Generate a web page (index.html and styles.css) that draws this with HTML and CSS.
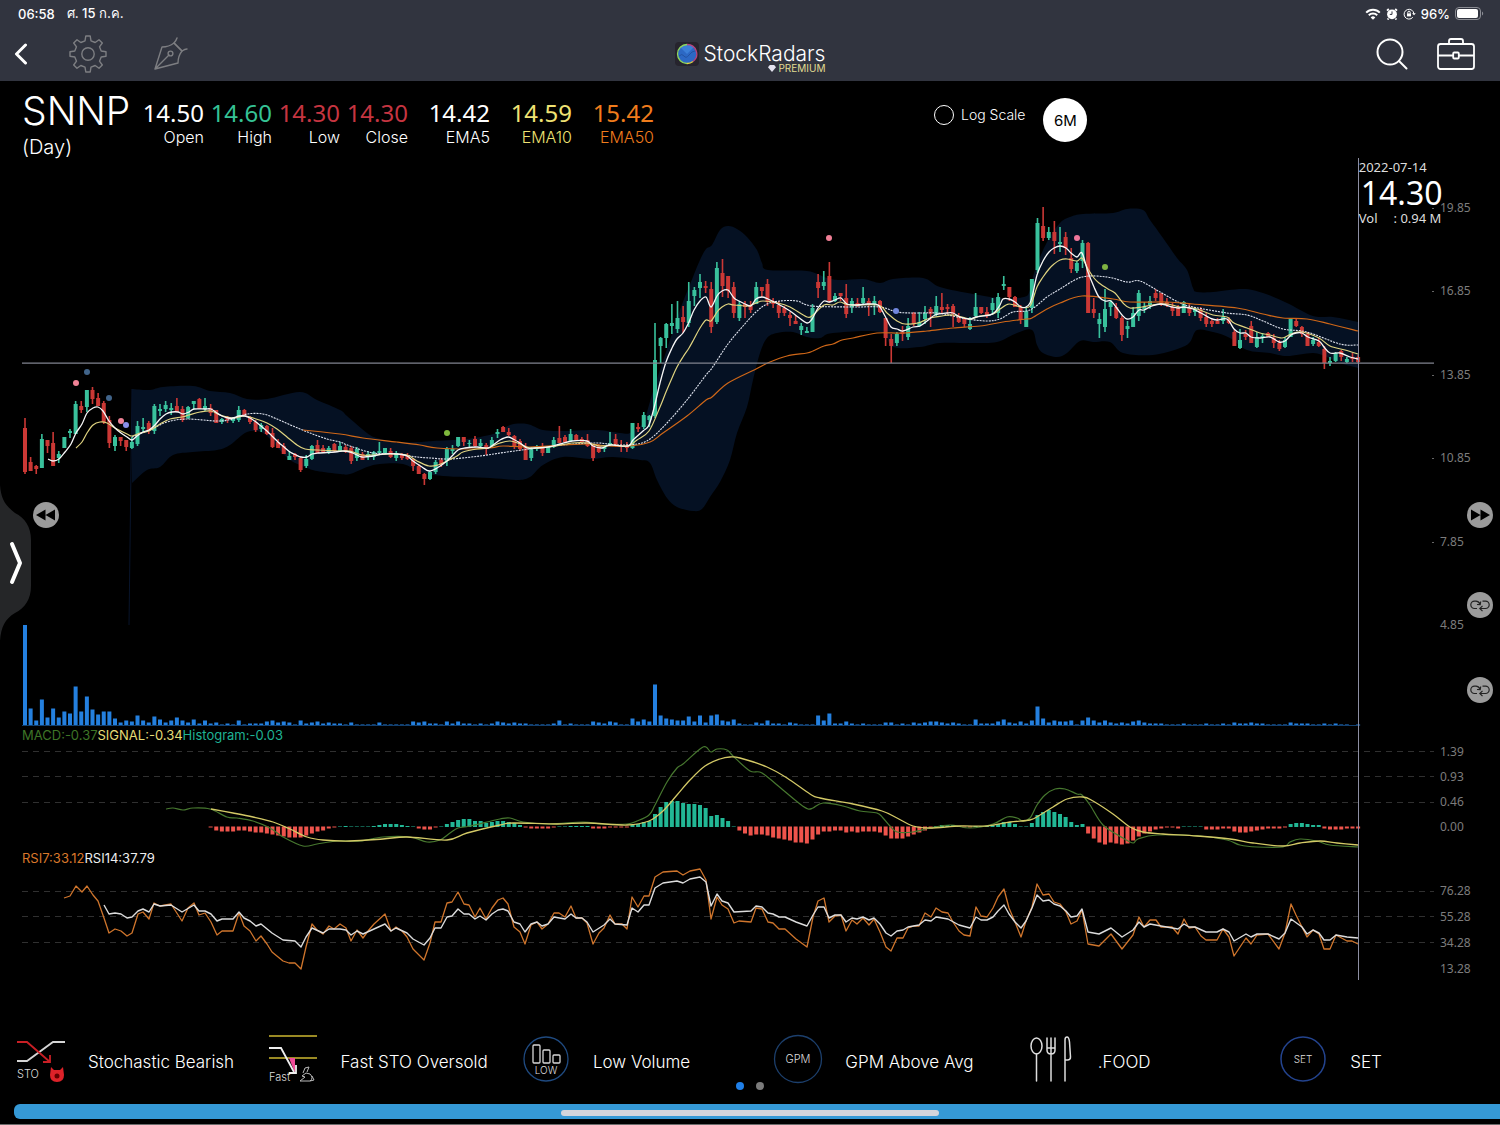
FILE: index.html
```html
<!DOCTYPE html>
<html lang="th">
<head>
<meta charset="utf-8">
<meta name="viewport" content="width=device-width, initial-scale=1">
<title>StockRadars – SNNP</title>
<link rel="stylesheet" href="styles.css">
</head>
<body>
<header class="topbar">
  <div class="status">
    <div class="status-side"><span>06:58</span><span>ศ. 15 ก.ค.</span></div>
    <div class="status-side status-right">
      <svg width="16" height="12" viewBox="0 0 16 12" fill="none" stroke="#fff" stroke-width="2"><path d="M1.2 4.6a9.6 9.6 0 0 1 13.6 0M3.8 7.2a6 6 0 0 1 8.4 0"/><path d="M8 11.8 5.7 9.4a3.3 3.3 0 0 1 4.6 0z" fill="#fff" stroke="none"/></svg>
      <svg width="12" height="12" viewBox="0 0 12 12"><circle cx="6" cy="6.3" r="4.9" fill="#fff"/><path d="M1 2.6 2.8 1M11 2.6 9.2 1M2.5 10.5 1.6 11.6M9.5 10.5l.9 1.1" stroke="#fff" stroke-width="1.8"/><path d="M6 3.4v3H3.8" fill="none" stroke="#31343f"/></svg>
      <svg width="13" height="12" viewBox="0 0 13 12" fill="none" stroke="#fff"><path d="M9.8 9.3A4.9 4.9 0 1 1 10.9 6"/><path d="m9 5.2 2 2 1.8-2z" fill="#fff" stroke="none"/><rect x="4" y="5.4" width="4" height="3" fill="#fff" stroke="none"/><path d="M4.8 5.5V4.4a1.2 1.2 0 0 1 2.4 0v1.1"/></svg>
      <span>96%</span>
      <svg width="29" height="13" viewBox="0 0 29 13"><rect x=".5" y=".5" width="25" height="12" rx="3.5" fill="none" stroke="#8b8d94"/><rect x="2" y="2" width="21" height="9" rx="2" fill="#fff"/><path d="M27 4.5c1.600.5 1.600 3.500 0 4z" fill="#8b8d94"/></svg>
    </div>
  </div>
  <nav class="nav">
    <div class="nav-side">
      <button class="icon-btn back" aria-label="Back"><svg width="14" height="22" viewBox="0 0 14 22" fill="none" stroke="#fff" stroke-width="3" stroke-linecap="round" stroke-linejoin="round"><path d="M11.500 2 2.500 11l9 9"/></svg></button>
      <button class="icon-btn gear" aria-label="Settings"><svg width="38" height="38" viewBox="-19 -19 38 38" fill="none" stroke="#7d7e82" stroke-width="1.400" stroke-linejoin="round"><circle r="6.200"/><path d="M-3-13.200-2.200-18H2.200L3-13.200 7.200-11.500 11-14.300 14.300-11 11.500-7.200 13.200-3 18-2.200V2.200L13.200 3 11.500 7.200 14.300 11 11 14.300 7.200 11.500 3 13.200 2.200 18H-2.200L-3 13.200-7.200 11.500-11 14.300-14.300 11-11.500 7.200-13.200 3-18 2.200V-2.200L-13.200-3-11.500-7.200-14.300-11-11-14.300-7.200-11.500z"/></svg></button>
      <button class="icon-btn" aria-label="Draw"><svg width="36" height="34" viewBox="0 0 36 34" fill="none" stroke="#7d7e82" stroke-width="1.400" stroke-linejoin="round" stroke-linecap="round"><path d="M2 32 9 10q7 0 12-4l8 8q-4 5-4 12zL16 18"/><circle cx="17.500" cy="16.500" r="2.400"/><path d="M21 6q2-2 3-5M29 14q3-2 5-2M21 6l8 8"/></svg></button>
    </div>
    <a class="brand" href="#">
      <svg width="24" height="24" viewBox="0 0 24 24"><rect width="24" height="24" rx="4" fill="#26242d"/><circle cx="12" cy="12" r="9.500" fill="#2c68c4"/><path d="M12 12 5 5a10 10 0 0 1 14 0z" fill="#3b7fd8"/><path d="M4 14q3-3 5 0t5-1 6-4" fill="none" stroke="#2353a2"/><path d="M12 2.500a9.500 9.500 0 0 0 0 19" fill="none" stroke="#8fd65a" stroke-width="1.300"/><path d="M12 21.500a9.500 9.500 0 0 0 6-2" fill="none" stroke="#e5d33e" stroke-width="1.300"/><path d="M18 19.500a9.500 9.500 0 0 0-6-17" fill="none" stroke="#b8447f" stroke-width="1.300"/></svg>
      <span class="brand-text"><span class="brand-name">StockRadars</span><span class="brand-tier"><svg width="8" height="7" viewBox="0 0 8 7"><path d="M1.800 0h4.400L8 2.200 4 7 0 2.200z" fill="#e4e4f0"/></svg>PREMIUM</span></span>
    </a>
    <div class="nav-side nav-right">
      <button class="icon-btn" aria-label="Search"><svg width="32" height="32" viewBox="0 0 32 32" fill="none" stroke="#fff" stroke-width="2" stroke-linecap="round"><circle cx="14" cy="14" r="12.500"/><path d="m23 23 7.500 7.500"/></svg></button>
      <button class="icon-btn" aria-label="Portfolio"><svg width="38" height="32" viewBox="0 0 38 32" fill="none" stroke="#fff" stroke-width="1.800" stroke-linejoin="round"><rect x="1" y="6" width="36" height="25" rx="2.500"/><path d="M12 6V3q0-2 2-2h10q2 0 2 2v3M1 17.500h15M22 17.500h15"/><rect x="16.200" y="14.500" width="5.600" height="6" rx="1"/></svg></button>
    </div>
  </nav>
</header>

<main>
  <section class="info">
    <div class="symbol"><h1>SNNP</h1><p>(Day)</p></div>
    <dl class="stats">
      <div class="stat"><dd>14.50</dd><dt>Open</dt></div>
      <div class="stat"><dd class="up">14.60</dd><dt>High</dt></div>
      <div class="stat"><dd class="down">14.30</dd><dt>Low</dt></div>
      <div class="stat"><dd class="down">14.30</dd><dt>Close</dt></div>
      <div class="stat ema"><dd>14.42</dd><dt>EMA5</dt></div>
      <div class="stat ema ema10"><dd>14.59</dd><dt>EMA10</dt></div>
      <div class="stat ema ema50"><dd>15.42</dd><dt>EMA50</dt></div>
    </dl>
    <div class="options">
      <label class="log"><input type="checkbox">Log Scale</label>
      <button class="range">6M</button>
    </div>
  </section>

  <section class="chart" aria-label="SNNP daily chart">
    <div class="panel price">
      <svg class="plot" id="price" viewBox="22 158 1412 467" preserveAspectRatio="none"></svg>
      <ol class="axis"><li>19.85</li><li>16.85</li><li>13.85</li><li>10.85</li><li>7.85</li><li>4.85</li></ol>
    </div>
    <div class="panel volume">
      <svg class="plot" id="volume" viewBox="22 625 1412 101" preserveAspectRatio="none"></svg>
    </div>
    <p class="legend"><span class="c-macd">MACD:-0.37</span><span class="c-signal">SIGNAL:-0.34</span><span class="c-hist">Histogram:-0.03</span></p>
    <div class="panel macd">
      <svg class="plot" id="macd" viewBox="22 744 1412 106" preserveAspectRatio="none"></svg>
      <ol class="axis"><li>1.39</li><li>0.93</li><li>0.46</li><li>0.00</li></ol>
    </div>
    <p class="legend"><span class="c-rsi7">RSI7:33.12</span><span class="c-rsi14">RSI14:37.79</span></p>
    <div class="panel rsi">
      <svg class="plot" id="rsi" viewBox="22 866 1412 114" preserveAspectRatio="none"></svg>
      <ol class="axis"><li>76.28</li><li>55.28</li><li>34.28</li><li>13.28</li></ol>
    </div>
    <div class="overlay">
      <div class="cursor">
        <span class="cursor-date">2022-07-14</span>
        <strong>14.30</strong>
        <span class="cursor-vol"><span>Vol</span><span>: 0.94 M</span></span>
      </div>
    </div>
    <button class="round rewind" aria-label="Earlier"><svg viewBox="0 0 26 26"><path d="M12.500 7.500v11L3 13zM22 7.500v11L12.500 13z"/></svg></button>
    <button class="round forward" aria-label="Later"><svg viewBox="0 0 26 26"><path d="M13.500 7.500v11L23 13zM4 7.500v11l9.500-5.500z"/></svg></button>
    <button class="round swap-a" aria-label="Switch upper indicator"><svg viewBox="0 0 26 26"><path class="loop" d="M10 16.500H7.500a3.700 3.700 0 0 1 0-7.400H9q2.500 0 4 3M10 12.500l3.200.2.500-3.200M15.500 9.100h3a3.700 3.700 0 0 1 0 7.400h-5.500M15.500 13.800l-2.700 2.700 2.700 2.700"/></svg></button>
    <button class="round swap-b" aria-label="Switch lower indicator"><svg viewBox="0 0 26 26"><path class="loop" d="M10 16.500H7.500a3.700 3.700 0 0 1 0-7.400H9q2.500 0 4 3M10 12.500l3.200.2.500-3.200M15.500 9.100h3a3.700 3.700 0 0 1 0 7.400h-5.500M15.500 13.800l-2.700 2.700 2.700 2.700"/></svg></button>
  </section>
</main>

<footer class="footer">
  <ul class="signals">
    <li><a href="#">
      <svg class="signal-icon" viewBox="0 0 52 52" fill="none" stroke-width="1.800"><path d="M2 28h10L38 9h12" stroke="#d4d4d4"/><path d="M2 9h10l23 20M35 22v7h-7" stroke="#c91f25"/><path d="m36 34 3 3h6l3-3 1 8q0 7-7 7t-7-7z" fill="#dd2229"/><circle cx="42" cy="43" r="2.500" fill="#600"/><text x="2" y="45" class="t11">STO</text></svg>
      <span>Stochastic Bearish</span></a></li>
    <li><a href="#">
      <svg class="signal-icon" viewBox="0 0 52 52" fill="none" stroke-width="1.800"><path d="M2 3h48M2 25h48" stroke="#9a8a24"/><path d="M22 25h6v15z" fill="#f04a98"/><path d="M2 15h12l13 24M29 32v8h-7" stroke="#eee"/><path d="M33 48h10q4-3 0-7l-4-1-4 3 3 1zM36 40l2-5 4-1-2 5M43 48l4-1-2-4" stroke="#bbb" stroke-width="1"/><text x="2" y="48" class="t11">Fast</text></svg>
      <span>Fast STO Oversold</span></a></li>
    <li><a href="#">
      <svg class="signal-icon" viewBox="0 0 52 52" fill="none" stroke="#d8d8d8" stroke-width="1.300"><circle cx="26" cy="26" r="22" stroke="#1f4a80"/><rect x="13" y="12" width="7" height="18" rx="1"/><rect x="23" y="17" width="7" height="13" rx="1"/><rect x="33" y="22" width="7" height="8" rx="1"/><text x="26" y="41" text-anchor="middle" class="t10">LOW</text></svg>
      <span>Low Volume</span></a></li>
    <li><a href="#">
      <svg class="signal-icon" viewBox="0 0 52 52" fill="none"><circle cx="26" cy="26" r="23.500" stroke="#1c3f6c" stroke-width="1.300"/><text x="26" y="30" text-anchor="middle" class="t11">GPM</text></svg>
      <span>GPM Above Avg</span></a></li>
    <li><a href="#">
      <svg class="signal-icon" viewBox="0 0 52 52" fill="none" stroke="#ddd" stroke-width="1.500" stroke-linecap="round"><ellipse cx="11.500" cy="13" rx="5.500" ry="8"/><path d="M11.500 21v27M22 5v12q0 4 4 4t4-4V5M26 5v43M22 15h8M40 48V7q0-3 2-3t2.500 5l1 15q0 3-3 3H40"/></svg>
      <span>.FOOD</span></a></li>
    <li><a href="#">
      <svg class="signal-icon" viewBox="0 0 52 52" fill="none"><circle cx="26" cy="26" r="22" stroke="#23438e" stroke-width="1.500"/><text x="26" y="30" text-anchor="middle" class="t10">SET</text></svg>
      <span>SET</span></a></li>
  </ul>
  <div class="pager"><span class="on"></span><span></span></div>
  <div class="ad"><span class="home"></span></div>
</footer>

<button class="side-tab" aria-label="Open side panel"><svg width="32" height="156" viewBox="0 0 32 156"><path d="M0 0C1 14 5 20 15 28 25 33 31 42 31 55v46c0 13-6 22-16 27C5 134 1 142 0 156z" fill="#252628"/><path d="m12 59 8 19-8 19" fill="none" stroke="#fff" stroke-width="4" stroke-linecap="round" stroke-linejoin="round"/></svg></button>
<script src="chart.js"></script>
</body>
</html>
```
FILE: styles.css
```css
* { box-sizing: border-box; }

body {
  margin: 0;
  min-height: 100vh;
  display: flex;
  flex-direction: column;
  position: relative;
  background: #000;
  color: #fff;
  font-family: Inter, "Noto Sans", sans-serif;
  font-size: 16px;
  font-optical-sizing: none;
}

h1, p, dl, dd, ol, ul { margin: 0; padding: 0; list-style: none; }
button { padding: 0; border: 0; background: none; color: inherit; font: inherit; cursor: pointer; }
svg { display: block; }
a { color: inherit; text-decoration: none; }

/* Header */
.topbar { height: 81px; background: #31343f; }
.status {
  display: flex;
  justify-content: space-between;
  height: 27px;
  padding: 0 16px 0 18px;
  font-size: 13px;
  font-weight: 500;
}
.status-side { display: flex; align-items: center; gap: 12px; }
.status-right { gap: 5px; }
.nav {
  display: grid;
  grid-template-columns: 1fr auto 1fr;
  align-items: center;
  height: 54px;
  padding: 0 25px 0 14px;
}
.nav-side { display: flex; align-items: center; }
.nav-right { justify-content: flex-end; gap: 29px; }
.icon-btn { display: block; }
.gear { margin: 0 46px 0 41px; }
.brand { display: flex; align-items: center; gap: 5px; padding-left: 11px; }
.brand-text { display: flex; flex-direction: column; align-items: flex-end; padding-top: 8px; }
.brand-name { font-size: 21px; line-height: 20px; font-weight: 300; font-optical-sizing: auto; }
.brand-tier { display: flex; align-items: center; gap: 2px; font-size: 10px; line-height: 8px; color: #e0dc92; }

/* Quote summary */
main { flex: 1; display: flex; flex-direction: column; }
.info { display: flex; height: 77px; padding-left: 22px; }
.symbol { width: 114px; padding-top: 8px; white-space: nowrap; }
.symbol h1 { font-size: 39px; line-height: 44px; font-weight: 300; }
.symbol p { font-size: 20px; line-height: 28px; font-weight: 300; }
.stats { display: flex; padding-top: 18px; }
.stat { display: flex; flex-direction: column; width: 68px; text-align: right; }
.stat.ema { width: 82px; }
.stat dd { font: 24px/28px "Noto Sans", sans-serif; }
.stat dt { line-height: 20px; font-weight: 300; }
.up { color: #35c295; }
.down { color: #c63541; }
.ema10 { color: #efe273; }
.ema50 { color: #f07c1c; }
.options { display: flex; gap: 18px; margin-left: 280px; padding-top: 17px; }
.log { display: flex; align-items: center; gap: 7px; height: 33px; font-size: 14px; font-weight: 300; }
.log input {
  appearance: none;
  width: 20px;
  height: 20px;
  margin: 0;
  border: 1px solid #fff;
  border-radius: 50%;
}
.range { width: 44px; height: 44px; border-radius: 50%; background: #fff; color: #000; font-size: 15px; }

/* Chart panels */
.chart { flex: 1; display: flex; flex-direction: column; position: relative; padding-left: 22px; }
.panel { display: grid; grid-template-columns: 1fr 66px; min-height: 0; }
.price { flex: 1 1 467px; min-height: 300px; }
.volume { height: 101px; }
.macd { height: 106px; }
.rsi { height: 114px; }
.plot { width: 100%; height: 100%; min-height: 0; overflow: hidden; }
.plot * { vector-effect: non-scaling-stroke; }
.axis {
  display: flex;
  flex-direction: column;
  justify-content: space-between;
  padding-left: 6px;
  font: 12px/16px "Noto Sans", sans-serif;
  color: #7c7c7c;
}
.price .axis { padding-top: 42px; margin-bottom: -8px; }
.price .axis li::before { content: ""; float: left; width: 2px; height: 1px; margin: 8px 0 0 -8px; background: #666; }
.price .axis li:last-child::before { display: none; }
.macd .axis { padding-bottom: 15px; }
.rsi .axis { padding: 17px 0 3px 6px; }
.legend { font-size: 13px; line-height: 16px; height: 16px; }
.volume + .legend { height: 18px; line-height: 18px; }
.c-macd { color: #3e7527; }
.c-signal { color: #e5dc76; }
.c-hist { color: #1fb294; }
.c-rsi7 { color: #d9782b; }
.c-rsi14 { color: #eee; }

.overlay { position: absolute; inset: 0 66px 0 22px; pointer-events: none; }
.cursor {
  position: absolute;
  top: 0;
  bottom: 0;
  left: 94.6%;
  display: flex;
  flex-direction: column;
  border-left: 1px solid #8d8fa3;
  font: 13px/18px "Noto Sans", sans-serif;
  color: #ddd;
  white-space: nowrap;
}
.cursor strong { padding-left: 2px; font-size: 32px; line-height: 34px; font-weight: 400; color: #fff; }
.cursor-vol { display: flex; gap: 16px; line-height: 16px; }

.round { position: absolute; width: 26px; height: 26px; border-radius: 50%; background: #9b9b9b; }
.round svg { width: 26px; height: 26px; fill: #000; }
.round .loop { fill: none; stroke: #222; stroke-width: 1.2; }
.rewind { left: 33px; top: 344px; }
.forward { right: 7px; top: 344px; }
.swap-a { right: 7px; top: 434px; }
.swap-b { right: 7px; top: 519px; }
.side-tab { position: absolute; left: 0; top: 485px; }

/* Signal strip */
.footer { padding-top: 53px; border-bottom: 1px solid #6b6b6b; overflow: hidden; }
.signals { display: flex; margin-left: 15px; }
.signals li { flex: 0 0 17%; }
.signals a { display: flex; align-items: center; gap: 21px; height: 52px; font-size: 17px; font-weight: 300; white-space: nowrap; }
.signals a > span { padding-top: 6px; }
.signal-icon { width: 52px; height: 52px; flex: none; }
.signal-icon text { fill: #ddd; stroke: none; font-family: Inter, sans-serif; }
.t11 { font-size: 11px; }
.t10 { font-size: 10px; }
.pager { display: flex; justify-content: center; gap: 12px; height: 19px; }
.pager span { width: 8px; height: 8px; margin-top: -3px; border-radius: 50%; background: #7b7b7b; }
.pager .on { background: #1f7fe8; }
.ad {
  display: flex;
  justify-content: center;
  height: 15px;
  margin: 0 0 5px 14px;
  padding: 6px 14px 0 0;
  border-radius: 6px 0 0 6px;
  background: #3599d6;
}
.home { width: 25.7%; height: 6px; border-radius: 3px; background: #d3d5dc; }
```
FILE: chart.js
```js
// Bars sit 5.625 units apart; every series uses the viewBox units of its panel.
const X0 = 25, STEP = 5.625;
const NS = 'http://www.w3.org/2000/svg';
const pairs = s => s.trim().split(/\s+/).map(p => p.split(',').map(Number));
const barX = i => X0 + i * STEP;

function add(id, tag, attrs) {
  const el = document.createElementNS(NS, tag);
  for (const k in attrs) el.setAttribute(k, attrs[k]);
  document.getElementById(id).appendChild(el);
}
// Catmull-Rom spline through the points
function spline(p) {
  let d = '';
  for (let i = 0; i < p.length - 1; i++) {
    const a = p[i - 1] || p[i], b = p[i], c = p[i + 1], e = p[i + 2] || c;
    d += `C${b[0] + (c[0] - a[0]) / 6} ${b[1] + (c[1] - a[1]) / 6} ${c[0] - (e[0] - b[0]) / 6} ${c[1] - (e[1] - b[1]) / 6} ${c[0]} ${c[1]}`;
  }
  return d;
}
function line(id, s, color, width, smooth, extra) {
  const p = pairs(s);
  const d = 'M' + p[0] + (smooth ? spline(p) : 'L' + p.slice(1).join(' '));
  add(id, 'path', Object.assign({ d, fill: 'none', stroke: color, 'stroke-width': width, 'stroke-linejoin': 'round' }, extra));
}
const box = (x, y, w, h) => `M${x - w / 2} ${y}h${w}v${h}h${-w}z`;

// direction, high, body top, body bottom, low
const candles = `
r418,428,472,474 r457,462,471,471 r465,466,469,474 g434,439,468,468 r440,440,446,453 r432,443,466,466 g451,454,458,463 g437,437,448,448 g429,431,433,438 g401,404,434,434
r401,406,410,413 g390,390,407,412 r387,390,399,404 r393,398,406,406 r401,403,422,424 r416,420,443,448 g435,437,446,451 r437,437,441,446 r440,440,447,451 g437,442,448,449
g421,426,444,446 g418,427,429,433 r421,423,431,434 g404,406,431,434 g404,409,411,416 g401,405,409,412 g403,408,410,415 r398,406,412,412 r406,409,420,422 g406,407,418,419
g401,401,404,409 r398,399,409,409 g398,406,409,411 r404,408,413,416 r410,410,423,423 g418,419,422,424 r416,417,420,423 g417,418,421,423 g406,410,420,422 r409,410,416,416
r416,417,422,424 r420,422,430,432 g423,425,429,432 r425,426,434,435 r428,433,447,448 r439,442,448,448 r443,446,454,454 g451,456,460,460 r453,454,457,460 r457,458,470,472
g455,459,466,468 g445,446,459,460 r440,445,453,453 r445,448,452,453 g446,448,453,454 r443,444,451,452 g442,446,451,452 r445,447,452,453 r446,448,461,464 g447,449,458,461
r452,454,460,460 g451,454,457,460 g451,452,457,460 g442,451,453,454 g448,448,453,453 r448,451,457,458 g451,453,458,461 r453,455,458,460 r453,455,459,460 r458,459,466,471
r464,466,474,474 r473,474,479,485 g471,472,479,480 g460,462,472,474 r458,460,465,467 g447,449,461,466 g445,449,451,454 g437,437,446,447 r437,437,442,446 g440,443,444,447
r436,439,446,447 g439,443,446,447 r443,445,449,455 g437,440,446,447 g429,432,434,438 r426,427,432,432 r428,432,435,436 r435,436,447,449 r439,441,449,451 r443,447,460,460
g447,448,458,461 g445,447,449,451 r443,447,453,456 g446,447,453,453 g437,440,447,448 r426,438,443,443 r435,437,442,442 g429,434,441,442 r434,435,441,441 r437,439,442,442
r434,440,446,447 r444,445,458,461 r444,446,452,453 g446,447,449,452 g432,443,445,446 r434,439,446,447 r440,446,447,452 r442,446,448,452 g423,423,448,449 r423,427,429,432
g412,415,427,429 g415,416,420,427 g323,360,416,418 g337,338,346,363 g323,324,338,348 g304,323,326,334 g301,318,329,333 r306,317,322,333 g282,301,323,327 g287,290,296,306
g274,282,288,298 r281,286,288,293 r282,289,327,333 g262,268,322,324 r259,273,286,297 r276,276,291,298 r282,287,313,318 g301,304,318,321 r301,304,307,318 r301,306,310,313
g282,287,304,304 r287,287,291,297 r279,284,302,306 r298,301,304,308 r301,305,313,318 r306,308,313,316 r312,315,318,326 r315,321,324,324 g323,326,330,335 g327,331,333,333
g304,308,332,332 r274,282,288,298 g271,282,286,290 r262,276,301,303 g293,296,301,302 r293,293,296,301 r284,298,314,318 g298,301,307,313 r298,303,306,307 g287,298,303,305
r298,301,304,316 g296,301,304,315 r300,301,312,313 r318,318,338,346 r334,339,346,363 g332,334,343,346 r326,332,334,341 g318,326,337,340 r312,313,324,326 g312,322,326,327
g306,313,319,324 r307,309,314,327 g296,306,315,316 r293,307,310,313 r304,307,309,314 r304,306,314,327 r313,317,322,323 r318,319,324,327 g317,324,329,330 g293,307,316,317
r307,307,313,314 r307,312,316,318 g298,303,310,315 g293,297,313,318 g276,284,286,290 r287,287,297,301 r296,297,307,307 r305,307,320,324 g307,311,327,327 g279,279,308,313
g218,223,270,273 r207,226,238,241 g227,232,238,240 r221,232,241,254 g227,242,244,252 r232,237,248,255 r248,258,269,273 g261,263,271,273 g240,243,261,268 r242,243,313,313
r298,309,313,318 g313,319,324,338 g289,309,327,332 g300,302,307,316 r303,307,318,319 r316,318,335,341 g321,326,329,338 g307,313,327,327 g290,293,316,321 g302,307,309,313
g296,301,305,309 r289,293,298,301 r293,293,305,306 r298,302,305,307 r303,307,311,316 r305,308,316,316 g301,302,313,313 r303,308,313,316 g307,309,312,316 r307,309,318,321
r313,317,324,327 r319,321,324,327 r318,321,324,324 g309,317,321,324 r317,319,323,324 r330,332,346,346 g329,340,348,349 r330,334,337,340 r321,326,343,343 g332,337,347,348
g333,336,338,343 r332,333,337,337 r334,338,343,348 r340,343,349,351 g337,340,347,348 g318,319,337,337 r319,321,326,327 r326,327,334,337 r332,334,346,346 g337,340,344,346
r338,342,346,347 r346,349,363,369 g357,361,363,366 g352,353,361,362 r350,351,357,361 g357,359,362,363 r353,357,359,362 r355,357,362,363`;

const volumes = `101 17 5 26 8 17 8 14 12 39 14 29 16 11 14 14 7 3 5 4 10 5 3 9 6 3 5 8 5 3 6 2 5 2 3 1 2 1 5 1 2 2 2 4 5 3 4 3 1 5 2 3 4 2 3 2 2 1 3 1
1 1 1 3 1 1 1 1 1 4 3 4 2 2 1 4 2 4 2 2 1 2 1 2 4 3 2 3 2 2 1 1 1 1 2 5 1 2 1 1 1 4 3 2 4 3 1 1 7 4 6 4 41 10 7 6 5 5 9 4
10 3 10 11 5 4 6 2 1 1 3 2 5 2 2 1 3 2 1 1 1 10 5 12 2 2 4 2 1 2 1 1 1 3 3 1 2 1 3 2 3 4 4 3 2 3 2 1 1 6 2 2 2 4 6 3 2 4 2 5
19 7 3 5 4 4 5 1 5 8 5 3 5 3 2 3 2 4 5 3 2 2 2 1 1 1 2 1 1 1 2 1 1 2 1 3 2 2 3 2 2 1 1 1 1 3 2 2 2 1 1 2 1 2 1 1 0 1`;

const histogram = `-1 -4 -5 -5 -5 -4 -4 -5 -6 -6 -7 -8 -9 -10 -11 -11 -11 -9 -7 -5 -4 -2 -1 0 1 0 0 0 0 1 2 3 3 3 2 1 0 -2 -3 -3 -1 0 3 5 7 8 8 6 6 4 5 6
6 5 4 2 -1 -2 -2 -2 -2 -1 0 0 1 1 1 1 -2 -2 -2 -1 -1 -1 -1 2 3 5 6 13 20 25 26 26 24 23 23 22 19 11 12 9 6 0 -4 -7 -9 -8 -8 -9 -11 -12 -13 -14 -16 -16 -17 -13 -8
-5 -5 -4 -4 -6 -5 -6 -5 -5 -5 -6 -9 -12 -12 -12 -10 -8 -6 -4 -2 1 2 2 2 1 -1 -1 1 1 1 2 3 5 5 3 0 0 4 12 15 17 15 13 10 5 2 3 -7 -12 -16 -18 -16 -17 -18 -17 -14 -10 -7 -5 -3 -2
-1 -1 -2 0 0 0 0 -3 -3 -3 -2 -2 -5 -6 -6 -5 -4 -3 -2 -2 -2 -1 3 4 4 3 2 2 -2 -3 -3 -3 -2 -2 -2`;

const upper = pairs(`132,389 150,390 163,387 193,386 210,391 230,393 247,399 267,399 300,392 317,400 340,410 347,416 367,433 377,438 397,442 420,442 433,441 467,439 497,433 510,425 527,424 543,430 563,431 597,430 620,433 630,433 643,423 649,405 655,385 665,355 680,310 693,277 700,260 706,249 712,245 720,230 728,226 737,229 747,237 757,250 762,263 768,270 807,271 827,278 840,280 863,279 880,283 893,279 923,278 940,287 973,294 1000,298 1024,297 1030,290 1035,270 1047,242 1060,223 1070,217 1083,214 1113,213 1127,209 1143,210 1150,220 1163,238 1177,258 1187,270 1193,288 1197,292 1213,292 1243,289 1263,293 1287,303 1313,316 1333,317 1358,322`);
const lower = pairs(`132,483 147,470 160,467 173,455 193,452 217,450 230,445 247,432 263,433 277,447 290,460 307,468 317,471 340,474 350,474 367,467 380,464 403,464 420,472 443,476 490,478 517,480 530,477 543,465 563,457 590,459 613,457 640,460 650,463 657,480 667,498 677,507 693,511 702,509 710,497 720,482 730,460 737,433 747,407 753,380 760,353 767,338 777,333 793,332 807,337 820,338 833,333 880,332 893,347 920,347 940,343 973,343 997,342 1017,333 1032,330 1037,345 1043,353 1057,357 1067,353 1080,341 1093,342 1110,342 1123,353 1153,355 1180,348 1190,342 1197,330 1213,332 1230,338 1247,350 1270,353 1287,356 1313,353 1327,357 1340,363 1358,368`);

const ema5 = `48,459 53,461 59,459 65,452 71,444 76,433 82,424 87,413 93,408 98,407 103,411 109,421 115,428 121,433 127,437 132,440 137,436 143,432 149,430 155,425 160,419 166,414 172,412 178,412 183,414 189,412 194,409 205,409 211,409 217,413 222,416 228,418 233,418 239,416 245,416 250,418 256,422 261,426 267,431 273,437 278,442 284,447 290,452 296,455 301,457 307,457 312,454 318,453 335,452 343,451 350,452 355,454 362,457 373,456 383,454 397,454 407,456 413,461 422,467 429,471 437,468 447,461 452,456 458,450 465,448 477,447 488,448 493,445 500,440 508,437 513,439 520,443 527,448 535,448 548,447 560,444 572,441 587,441 593,446 602,448 610,445 628,446 633,440 643,431 649,425 655,404 660,383 666,362 672,348 677,339 683,333 689,322 694,310 700,301 706,297 711,307 717,296 722,291 728,290 734,298 739,301 745,304 751,306 756,299 762,297 768,299 778,304 790,311 798,317 807,323 812,319 818,308 824,301 829,302 835,300 841,298 847,304 857,305 867,304 878,305 885,316 891,327 897,329 903,331 913,327 920,326 927,321 935,315 947,313 953,313 960,317 970,319 976,317 990,315 995,312 1000,305 1003,299 1009,299 1015,302 1021,307 1026,307 1030,303 1033,293 1037,275 1043,261 1049,252 1054,248 1060,246 1066,248 1071,253 1077,257 1082,253 1088,272 1094,287 1099,297 1105,301 1111,301 1116,307 1122,315 1127,319 1133,317 1139,310 1144,310 1152,306 1161,304 1172,307 1178,308 1184,307 1193,309 1201,313 1210,318 1217,320 1227,319 1234,329 1240,333 1246,333 1251,337 1260,338 1270,337 1279,342 1285,341 1291,335 1296,333 1302,333 1308,337 1319,341 1324,347 1330,353 1340,353 1350,357 1358,359`;
const ema10 = `76,448 82,442 87,433 93,425 100,422 107,423 115,428 127,434 132,436 140,433 149,431 160,424 170,419 182,417 189,415 200,412 211,411 220,415 233,418 245,416 256,419 267,423 277,429 287,437 297,445 305,449 317,450 340,451 350,451 362,455 373,455 390,454 407,455 417,461 429,466 438,465 447,461 457,456 463,452 477,449 488,448 500,443 510,441 520,444 530,448 550,447 572,443 588,443 600,446 613,445 628,446 637,440 649,431 660,407 666,392 672,378 677,367 683,357 689,348 694,339 700,328 706,320 711,321 717,312 722,307 728,304 734,305 748,306 756,303 763,301 778,303 790,307 807,317 813,315 824,305 833,305 840,302 850,305 878,305 887,313 897,321 905,324 918,323 930,318 942,316 953,315 970,319 980,316 993,314 1000,309 1009,304 1021,307 1030,306 1037,287 1043,277 1049,269 1054,264 1060,260 1067,259 1077,261 1082,258 1088,269 1094,278 1099,283 1108,289 1115,293 1123,303 1130,308 1142,307 1152,305 1167,304 1180,307 1197,309 1213,315 1227,317 1234,323 1247,328 1260,333 1270,335 1282,338 1291,334 1302,332 1319,338 1330,346 1345,350 1358,354`;
const ema50 = `303,430 340,434 363,438 397,442 420,445 437,448 470,449 490,448 503,446 530,447 563,445 590,444 607,446 630,446 650,442 663,433 687,416 706,400 712,397 728,383 756,369 770,362 787,356 807,353 813,351 824,346 833,344 842,340 853,338 877,333 903,333 927,331 953,328 980,326 1003,322 1026,319 1032,318 1047,309 1060,303 1082,296 1113,299 1130,302 1167,302 1193,304 1237,308 1263,314 1283,318 1307,319 1330,324 1358,331`;
const sma20 = `132,437 150,430 167,422 187,419 217,421 233,419 247,414 263,414 277,419 293,426 310,433 327,439 340,442 350,446 373,453 397,454 417,457 430,458 450,459 480,456 507,452 530,449 563,445 597,443 617,445 637,444 650,439 667,423 687,400 706,375 712,368 728,344 743,326 756,312 767,304 780,301 797,301 812,306 853,307 880,307 897,312 913,313 937,313 953,316 967,319 987,321 1000,319 1013,312 1030,310 1047,297 1060,289 1082,277 1107,277 1127,282 1140,281 1160,292 1180,303 1193,307 1227,313 1247,315 1263,321 1283,329 1307,332 1340,344 1358,345`;

const macdLine = `166,809 173,808 183,810 193,808 210,809 227,817 237,818 253,821 270,828 283,837 303,846 317,844 337,841 360,841 383,837 410,837 427,842 440,840 450,833 458,828 470,826 500,819 510,818 523,822 550,824 583,822 603,824 627,824 637,821 649,815 655,805 667,782 677,768 683,764 700,749 706,747 711,752 717,749 727,750 733,756 750,771 762,773 783,790 800,804 808,809 813,808 823,803 843,806 860,811 877,813 883,818 890,826 897,832 913,832 930,828 950,825 970,828 993,824 1007,817 1017,818 1023,821 1030,818 1037,805 1045,795 1055,789 1065,789 1077,794 1082,795 1090,805 1103,825 1123,838 1133,843 1138,839 1157,835 1200,836 1227,840 1240,845 1257,847 1283,847 1290,842 1300,839 1317,841 1330,845 1358,847`;
const signalLine = `211,809 233,813 253,817 273,822 290,829 307,837 323,840 350,841 383,839 407,837 447,840 467,833 500,825 513,823 557,824 587,823 627,825 649,821 663,811 677,795 690,780 705,766 720,759 730,757 740,758 767,767 787,778 810,794 820,798 853,804 882,811 897,818 913,826 930,828 960,826 987,826 1010,822 1030,820 1040,815 1053,807 1067,799 1083,797 1093,801 1113,814 1130,827 1143,832 1163,834 1197,836 1230,839 1253,843 1283,846 1300,843 1320,841 1337,843 1358,845`;

const rsi7 = `64,898 70,896 76,886 82,892 87,886 93,895 98,901 104,918 109,933 115,929 121,931 127,936 132,933 138,914 143,912 149,919 154,903 160,906 171,904 182,921 188,908 194,903 199,915 205,913 211,922 217,935 222,931 233,931 239,913 244,926 250,931 256,941 261,936 267,944 272,952 283,961 289,963 295,963 301,969 306,947 312,924 317,930 323,934 329,926 334,929 340,924 346,928 351,941 357,930 363,938 368,931 374,924 385,914 391,931 396,927 402,931 407,937 413,949 424,960 430,943 435,922 441,922 447,903 452,902 458,892 464,904 469,905 475,917 480,908 486,919 492,908 498,900 503,898 508,904 514,927 520,932 525,944 531,925 537,922 542,929 548,924 554,913 559,913 565,917 571,906 576,918 582,918 587,923 593,944 599,933 604,928 610,915 615,924 622,924 627,929 632,897 638,907 644,896 649,896 655,877 663,872 677,871 683,875 690,871 700,869 706,880 711,919 717,897 722,905 728,909 734,923 739,921 751,922 756,908 762,909 768,922 773,923 779,929 785,929 796,939 807,947 813,917 818,901 824,898 829,922 835,916 841,915 846,931 852,920 857,924 863,918 869,925 874,919 880,932 886,947 891,951 897,938 903,938 908,928 914,926 919,926 925,913 931,917 936,908 942,912 948,913 953,922 959,931 964,935 970,936 976,907 981,916 987,917 993,908 998,897 1004,889 1009,908 1015,922 1021,937 1026,921 1032,907 1037,884 1043,895 1049,894 1054,902 1060,904 1066,912 1071,924 1077,921 1082,910 1088,944 1099,946 1111,934 1122,949 1133,935 1139,917 1144,927 1150,920 1156,920 1161,927 1172,927 1178,934 1184,919 1189,928 1195,927 1201,936 1206,940 1217,940 1223,929 1229,937 1234,956 1246,938 1251,944 1257,935 1268,934 1279,949 1285,933 1291,904 1296,915 1307,937 1313,930 1319,934 1324,949 1330,949 1336,935 1347,941 1352,941 1358,944`;
const rsi14 = `104,905 109,914 115,913 121,914 127,918 132,917 138,911 143,909 149,912 154,904 160,906 171,905 182,912 194,905 199,911 205,911 211,914 217,921 222,919 233,919 239,912 244,918 250,921 256,926 261,924 272,933 283,940 295,941 301,947 306,937 312,928 323,933 329,929 340,929 346,930 351,935 357,931 363,934 385,924 391,931 396,928 407,933 413,939 424,945 430,938 435,928 441,928 447,917 452,916 458,909 464,914 469,914 475,919 480,916 486,920 492,914 498,910 503,909 508,911 514,922 520,924 525,932 531,924 537,922 542,926 548,924 554,917 565,919 571,914 576,918 582,918 587,922 593,932 604,925 610,919 615,924 627,925 632,908 638,912 644,905 649,905 655,888 663,883 677,881 683,883 690,879 700,877 706,882 711,906 717,894 722,901 728,903 734,912 751,911 756,906 762,907 768,913 773,914 779,917 785,917 796,922 807,926 813,915 818,907 824,907 829,918 835,915 841,915 846,922 852,918 857,919 863,917 869,920 874,918 880,924 886,933 891,936 897,931 903,930 908,927 919,925 925,920 931,921 936,917 948,919 959,925 970,928 976,917 981,920 987,920 993,917 998,911 1004,905 1009,914 1015,922 1021,928 1026,921 1032,908 1037,895 1043,901 1049,900 1054,904 1060,906 1066,911 1071,917 1077,916 1082,909 1088,932 1099,934 1111,928 1122,937 1133,930 1139,922 1144,927 1150,924 1161,926 1178,929 1184,924 1189,927 1195,927 1206,932 1217,932 1223,929 1229,932 1234,941 1246,934 1251,937 1257,934 1268,934 1279,939 1285,933 1291,919 1302,927 1307,934 1313,930 1319,933 1324,940 1330,940 1336,935 1347,937 1358,938`;

const markers = [
  [76, 383, '#f08296'], [87, 372, '#41648a'], [109, 398, '#41648a'], [121, 421, '#f08296'], [126, 425, '#8a8fe8'],
  [447, 433, '#7fb93c'], [829, 238, '#f07f96'], [896, 311, '#7187dd'], [1077, 238, '#f0769a'], [1105, 267, '#7fb342'],
];

// Price
const back = lower.slice().reverse();
add('price', 'path', { d: 'M' + upper[0] + spline(upper) + 'L' + back[0] + spline(back) + 'z', fill: '#051123' });
add('price', 'path', { d: 'M132 389L129 625', stroke: '#08142b', fill: 'none' });
const body = { r: '', g: '' }, wick = { r: '', g: '' };
candles.trim().split(/\s+/).forEach((c, i) => {
  const [hi, top, bottom, lo] = c.slice(1).split(',').map(Number);
  body[c[0]] += box(barX(i), top, 4, Math.max(bottom - top, 1));
  wick[c[0]] += box(barX(i), hi, 1.6, lo - hi);
});
add('price', 'path', { d: wick.r + body.r, fill: '#cb3835' });
add('price', 'path', { d: wick.g + body.g, fill: '#39c19c' });
line('price', sma20, '#dfe3ee', 1.1, true, { 'stroke-dasharray': '2 1' });
line('price', ema50, '#cf6718', 1.2, true);
line('price', ema10, '#e0d480', 1.2, true);
line('price', ema5, '#f7f7f7', 1.3, true);
markers.forEach(([x, y, color]) =>
  add('price', 'path', { d: `M${x} ${y}h.01`, stroke: color, 'stroke-width': 6, 'stroke-linecap': 'round' }));
add('price', 'path', { d: 'M22 363.2H1434', stroke: '#80838f', 'stroke-width': 1.3 });

// Volume
add('volume', 'path', {
  d: volumes.trim().split(/\s+/).map((v, i) => box(barX(i), 725.5 - v, 4, +v)).join('') + 'M22 725h1336v.5H22z',
  fill: '#2480df',
});

// Dashed guides
const guide = (id, y) => add(id, 'path', { d: `M22 ${y}H1434`, stroke: '#303030', 'stroke-width': 1, 'stroke-dasharray': '6 5' });
[751.5, 776.5, 802.5].forEach(y => guide('macd', y));
[891.5, 916.5, 942.5].forEach(y => guide('rsi', y));

// MACD
let rise = '', fall = '';
histogram.trim().split(/\s+/).forEach((v, i) => {
  const h = Math.abs(v) || 0.5, x = barX(i + 33);
  if (v < 0) fall += box(x, 826.5, 4, h);
  else rise += box(x, 827 - h, 4, h);
});
add('macd', 'path', { d: rise, fill: '#22b795' });
add('macd', 'path', { d: fall, fill: '#ee544c' });
line('macd', macdLine, '#47782f', 1.2, true);
line('macd', signalLine, '#d3c966', 1.3, true);

// RSI
line('rsi', rsi7, '#cf752c', 1.3, false);
line('rsi', rsi14, '#dcdcdc', 1.4, false);
```
